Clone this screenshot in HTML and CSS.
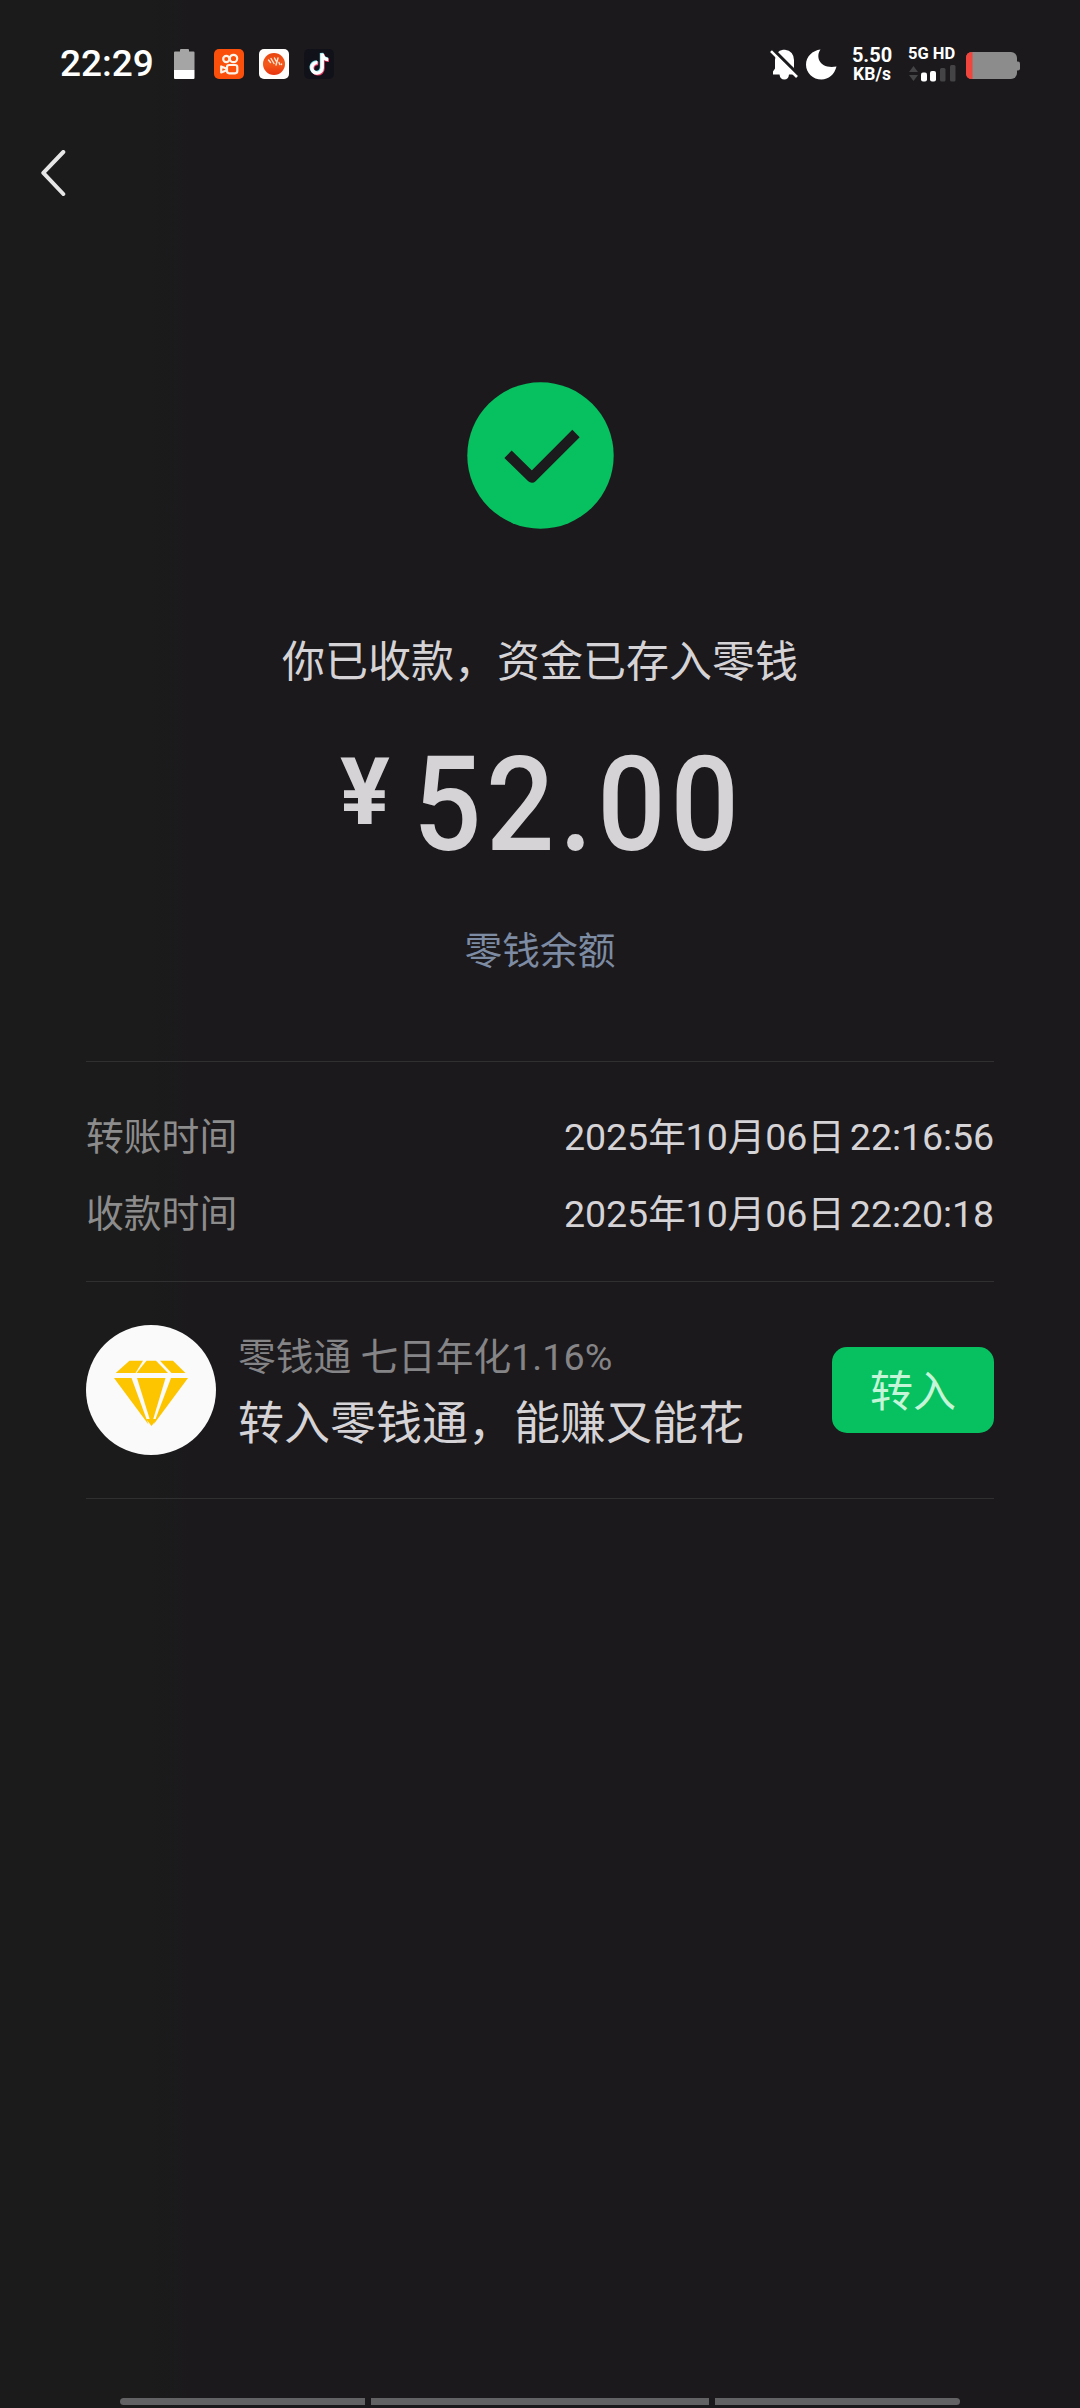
FILE: index.html
```html
<!DOCTYPE html>
<html lang="zh-CN">
<head>
<meta charset="utf-8">
<title>收款</title>
<link rel="stylesheet" href="styles.css">
</head>
<body>
<div class="screen">
  <header class="status">
    <div class="status-left">
      <span class="clock">22:29</span>
      <svg class="icon-low" width="21" height="30" viewBox="0 0 21 30"><path d="M6 2.500V1Q6 0 7 0h7q1 0 1 1v1.500h4.500q1 0 1 1V21H0V3.500q0-1 1-1z" fill="#a5a5a5"/><path d="M0 21h20.500v8q0 1-1 1H1q-1 0-1-1z" fill="#fff"/></svg>
      <svg width="30" height="30" viewBox="0 0 30 30"><rect width="30" height="30" rx="5" fill="#fb500b"/><g fill="none" stroke="#fff3e8" stroke-width="2.200"><circle cx="12.300" cy="10" r="3.100"/><circle cx="19.500" cy="9.500" r="3.700"/><rect x="13" y="16" width="10.300" height="8.300" rx="2.200"/><path d="M7.200 17.500v6l5-2v-2z" stroke-linejoin="round"/></g></svg>
      <svg width="30" height="30" viewBox="0 0 30 30"><defs><linearGradient id="ball" x1="0" y1="0" x2="0" y2="1"><stop offset="0" stop-color="#e9430f"/><stop offset=".5" stop-color="#f45a1b"/><stop offset="1" stop-color="#e8330e"/></linearGradient></defs><rect width="30" height="30" rx="5" fill="#fffdfc"/><circle cx="15" cy="15" r="11" fill="url(#ball)"/><path d="M9.500 11l2 2.500M12 9.500l3 5M15.500 9l1.500 3M19 9l-2 7M20 13.500l.8 2M22.500 15v.5" stroke="#ffe5d5" stroke-width="1.400" stroke-linecap="round"/></svg>
      <svg width="30" height="30" viewBox="0 0 30 30"><rect width="30" height="30" rx="5" fill="#11111a"/><g fill="none" stroke-width="3.400"><path d="M13.500 13.700a5.200 5.200 0 1 0 4.700 5.200V4.500c.2 3.500 2.500 5.800 6 6" stroke="#ef3f68" transform="translate(.8 .8)"/><path d="M13.500 13.700a5.200 5.200 0 1 0 4.700 5.200V4.500c.2 3.500 2.500 5.800 6 6" stroke="#6fdde4" transform="translate(-.7 -.6)"/><path d="M13.500 13.700a5.200 5.200 0 1 0 4.700 5.200V4.500c.2 3.500 2.500 5.800 6 6" stroke="#fff"/></g></svg>
    </div>
    <div class="status-right">
      <svg class="icon-bell" width="30" height="31" viewBox="0 0 30 31"><path d="M3 25.500V22.500l2-3v-8.500Q5.500 2 13 .8h2Q23.500 2 24 11v8.500l2 3v3h-7q-.5 5-4.700 5T9.500 25.500z" fill="#fff"/><path d="M1 -1.500L31 28.500" stroke="#1b1a1c" stroke-width="3.400"/><path d="M1 2.200L27 28" stroke="#fff" stroke-width="2.600"/></svg>
      <svg class="icon-moon" width="31" height="31" viewBox="0 0 31 31"><path d="M14.500 .5C9 8 14 20.500 30.500 17.500 28.500 25.500 22.500 30.500 15.500 30.500 7 30.500 0 24 0 15.700 0 7.500 6.500 1.500 14.500 .5z" fill="#fff"/></svg>
      <div class="speed"><span class="speed-value">5.50</span><span class="speed-unit">KB/s</span></div>
      <div class="network">
        <span class="network-type">5G HD</span>
        <svg width="48" height="17" viewBox="0 0 48 17"><path d="M1 7l4.500-6 4.500 6zM1 10l4.500 6 4.500-6z" fill="#444345"/><rect x="13" y="7.500" width="6" height="9" rx="2" fill="#fff"/><rect x="22" y="6" width="6" height="10.500" rx="2" fill="#fff"/><rect x="32" y="3" width="5.500" height="13.500" rx="1.500" fill="#444345"/><rect x="42" y="0" width="5.500" height="16.500" rx="1.500" fill="#444345"/></svg>
      </div>
      <svg class="icon-battery" width="54" height="27" viewBox="0 0 54 27"><rect width="51" height="27" rx="6" fill="#8d8c8d"/><path d="M51 9.500h1q2 0 2 2v5q0 2-2 2h-1z" fill="#8d8c8d"/><path d="M6 0H6.500V27H6Q0 27 0 21V6Q0 0 6 0z" fill="#f0453d"/></svg>
    </div>
  </header>

  <nav class="topbar">
    <svg width="26" height="46" viewBox="0 0 26 46"><path d="M23.300 2L3.300 22.800 23.300 44" fill="none" stroke="#e6e6e6" stroke-width="4" stroke-linecap="round" stroke-linejoin="round"/></svg>
  </nav>

  <main class="content">
    <svg class="success" width="147" height="147" viewBox="0 0 147 147"><circle cx="73.500" cy="73.500" r="73.200" fill="#07c160"/><path d="M41 72.200L64.900 95.600 109 51.500" fill="none" stroke="#1b1a1c" stroke-width="10.400" stroke-linejoin="round"/></svg>
    <p class="message">你已收款，资金已存入零钱</p>
    <div class="amount"><span class="currency">¥</span><span class="value">52.00</span></div>
    <a class="balance">零钱余额</a>

    <dl class="times">
      <div class="row"><dt>转账时间</dt><dd>2025年10月06日 22:16:56</dd></div>
      <div class="row"><dt>收款时间</dt><dd>2025年10月06日 22:20:18</dd></div>
    </dl>

    <section class="promo">
      <svg class="gem" width="130" height="130" viewBox="0 0 130 130"><circle cx="65" cy="65" r="65" fill="#fafafa"/><g fill="#fdc500"><path d="M43.500 35.700H57L49.500 48H29.700z"/><path d="M60.500 35.700H70L82 48H50.500z"/><path d="M74 35.700H87L99.500 48H85.500z"/><path d="M28 53H45.500L62.500 99.500z"/><path d="M51 53H79.500L65.500 100z"/><path d="M85 53H102L67.500 99.500z"/><path d="M60 94L65.500 101 71 94z"/></g></svg>
      <div class="promo-text">
        <p class="promo-rate">零钱通 七日年化1.16%</p>
        <p class="promo-title">转入零钱通，能赚又能花</p>
      </div>
      <button class="promo-button">转入</button>
    </section>
  </main>

  <footer class="gesture"><i class="side start"></i><i class="mid"></i><i class="side end"></i></footer>
</div>
</body>
</html>
```
FILE: styles.css
```css
* { box-sizing: border-box; margin: 0; padding: 0; }
body { background: #1b1a1c; }
svg { display: block; flex: none; }

.screen {
  width: 1080px;
  height: 2408px;
  display: flex;
  flex-direction: column;
  background: linear-gradient(90deg, #1b1b1b 0, #1b1b1b 150px, #1b191c 190px);
  color: #d5d3d6;
  font-family: Roboto, "Noto Sans CJK SC", sans-serif;
  overflow: hidden;
}

.status {
  height: 128px;
  padding: 0 60px;
  display: flex;
  justify-content: space-between;
  align-items: center;
  color: #fff;
}
.status-left, .status-right { display: flex; align-items: center; height: 128px; }
.status-left { gap: 15px; }
.clock { width: 99px; font-size: 37px; font-weight: 500; line-height: 44px; white-space: nowrap; }
.icon-low { margin-right: 4px; }
.icon-moon { margin-left: 6px; }
.speed { width: 44px; margin-left: 13px; padding-top: 1px; display: flex; flex-direction: column; align-items: center; font-weight: 700; }
.speed-value { font-size: 20px; line-height: 19px; }
.speed-unit { font-size: 17.500px; line-height: 18px; }
.network { width: 49px; margin-left: 14px; display: flex; flex-direction: column; gap: 3px; }
.network-type { font-size: 16.500px; line-height: 16px; font-weight: 700; white-space: nowrap; }
.icon-battery { margin: 3px 0 0 9px; }

.topbar { height: 94px; padding: 22px 40px; }

.content {
  flex: 1;
  display: flex;
  flex-direction: column;
  align-items: center;
  padding: 160px 86px 0;
}
.message { margin-top: 103px; height: 60px; font-size: 43px; line-height: 60px; }
.amount {
  margin-top: 49px;
  height: 130px;
  display: flex;
  align-items: flex-start;
}
.currency { width: 73px; font-size: 93px; line-height: 104px; font-weight: 700; }
.value {
  width: 327px;
  font-size: 131px;
  line-height: 129px;
  font-weight: 500;
  letter-spacing: 5px;
  transform: scaleX(.92);
  transform-origin: 0 0;
}
.balance { margin-top: 55px; height: 50px; font-size: 37.700px; line-height: 50px; color: #7d8ba3; }

.times {
  align-self: stretch;
  margin-top: 85px;
  height: 221px;
  border-top: 1px solid #303031;
  border-bottom: 1px solid #303031;
  padding-top: 37px;
}
.row { height: 77px; display: flex; justify-content: space-between; font-size: 37.800px; line-height: 77px; }
.row dt { color: #8d8c8d; }
.row dd { font-size: 37.600px; letter-spacing: -.1px; word-spacing: -4px; }

.promo {
  align-self: stretch;
  height: 217px;
  border-bottom: 1px solid #303031;
  display: flex;
  align-items: center;
}
.promo-text { flex: 1; margin-left: 22px; padding-top: 1px; }
.promo-rate { font-size: 37.700px; line-height: 66px; color: #858486; }
.promo-title { font-size: 46px; line-height: 67px; }
.promo-button {
  width: 162px;
  height: 86px;
  padding-top: 4px;
  border: 0;
  border-radius: 15px;
  background: #07c160;
  color: #c5f5d8;
  font: 400 43px/82px Roboto, "Noto Sans CJK SC", sans-serif;
}

.gesture { height: 30px; padding: 20px 120px 0; display: flex; gap: 6px; }
.gesture i { height: 7px; background: #626163; }
.side { width: 245px; }
.mid { flex: 1; }
.start { border-radius: 4px 0 0 4px; }
.end { border-radius: 0 4px 4px 0; }
```
